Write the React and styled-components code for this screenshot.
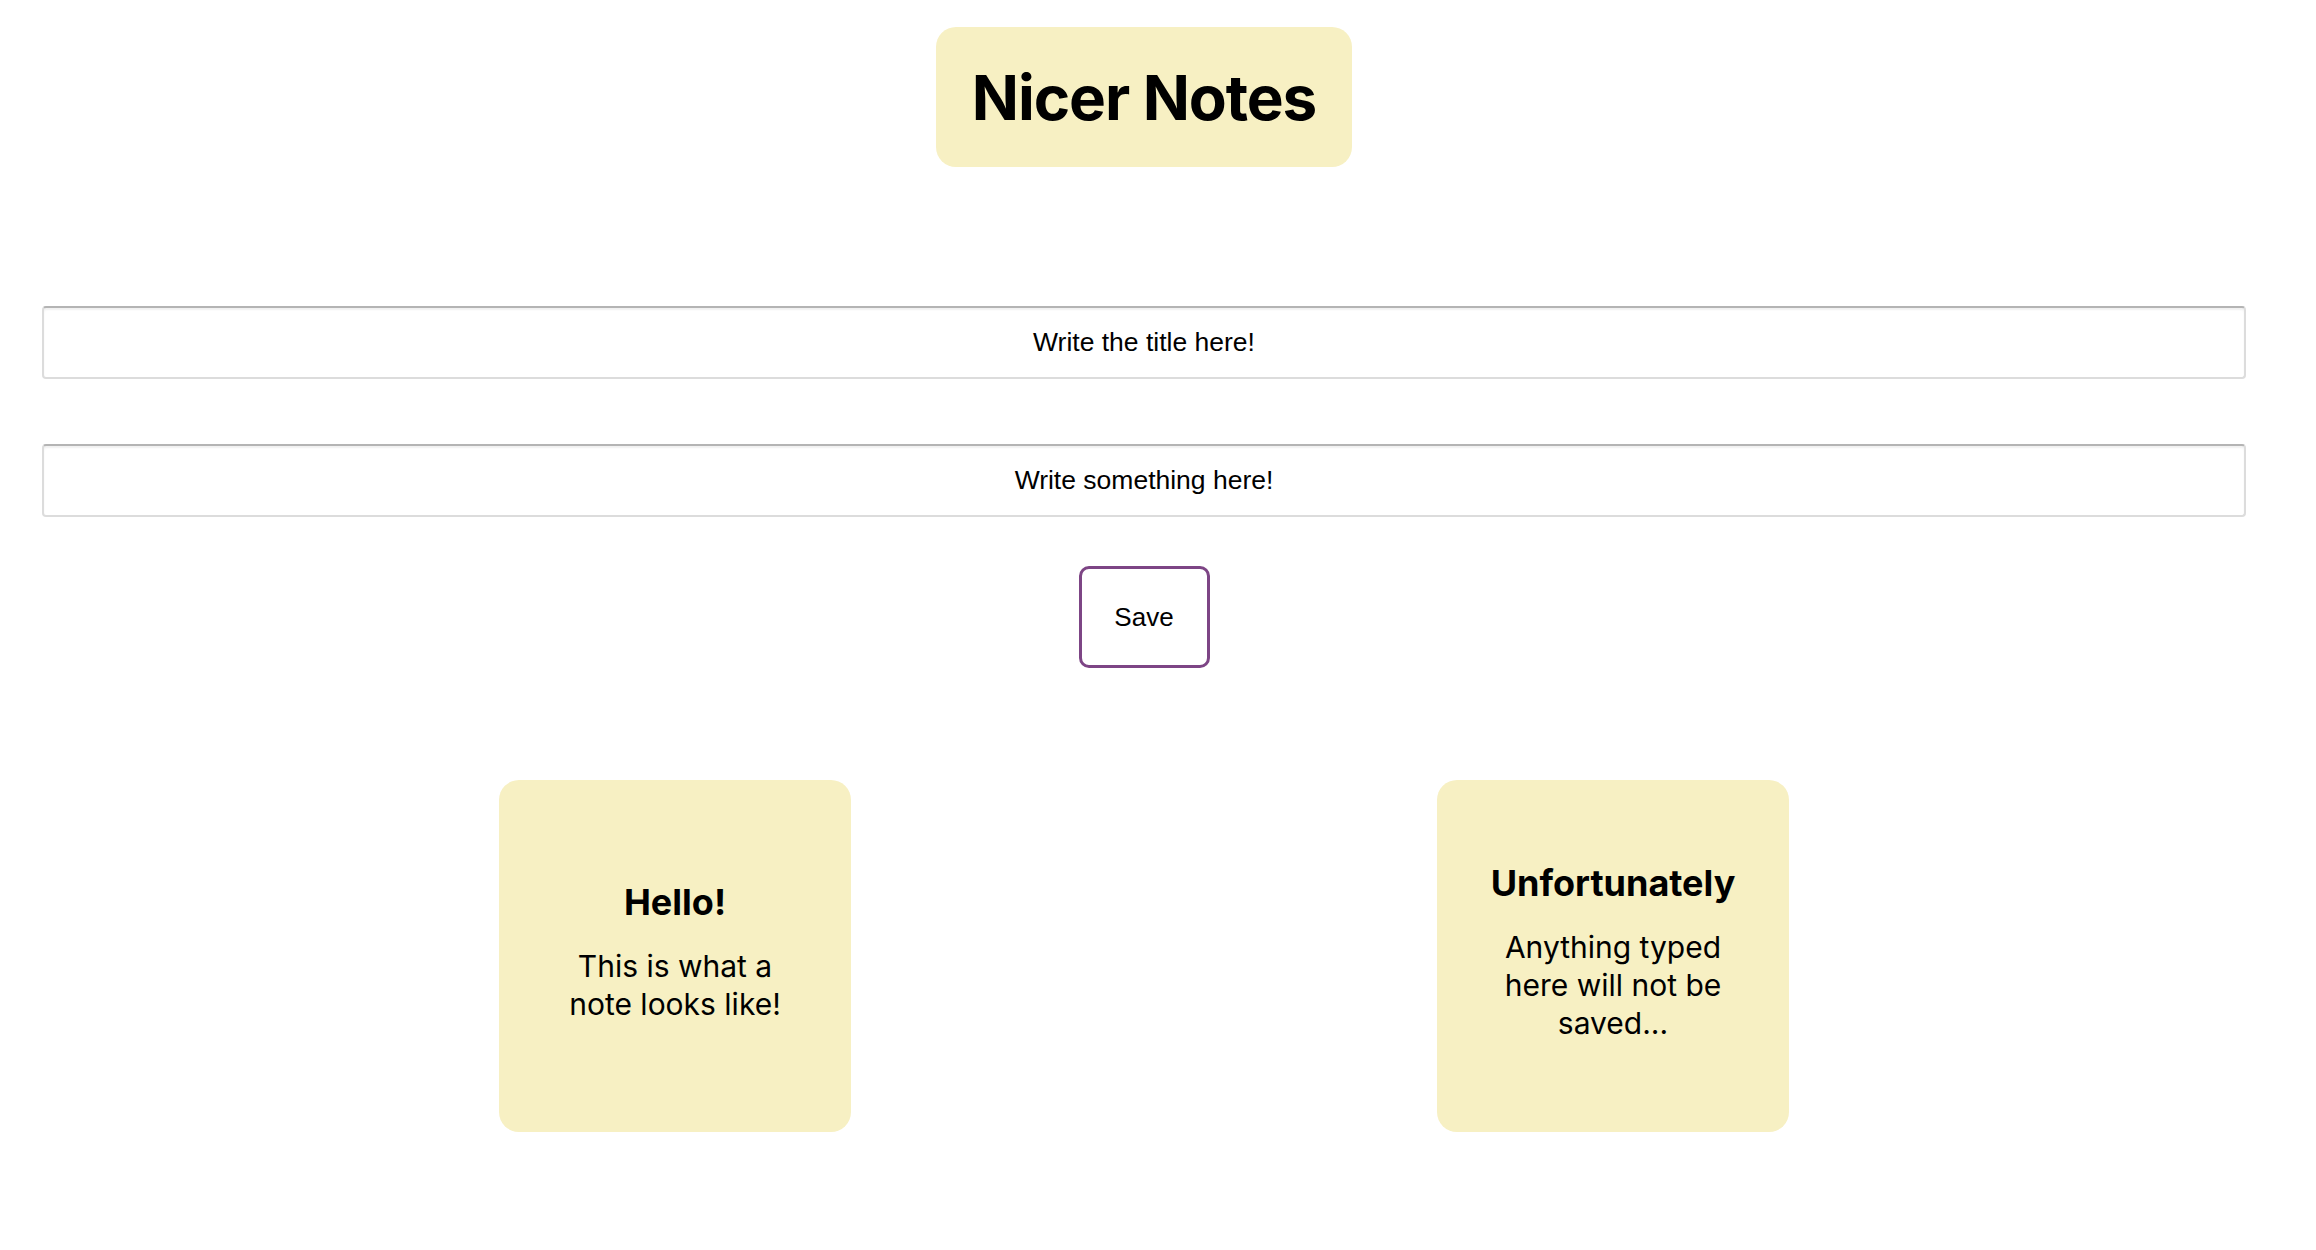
import React from 'react'
import styled, { createGlobalStyle } from 'styled-components'

const GlobalStyle = createGlobalStyle`
    body {
        margin: 0;
        background: #ffffff;
        font-family: Inter, 'Noto Sans', sans-serif;
        color: #000;
    }
`

const Page = styled.div`
    display: flex;
    flex-direction: column;
    align-items: center;
    padding-right: 28px;
    padding-top: 27px;
    padding-bottom: 80px;
`

const Header = styled.div`
    background-color: #f7f0c3;
    border-radius: 20px;
    padding: 33px 36px 32px;
`

const Title = styled.h1`
    margin: 0;
    font-family: Inter, sans-serif;
    font-weight: 700;
    font-size: 62px;
    line-height: 75px;
    letter-spacing: -1.1px;
`

const Form = styled.form`
    width: 100%;
    box-sizing: border-box;
    padding: 0 42px;
    margin-top: 139px;
    display: flex;
    flex-direction: column;
    align-items: center;
    gap: 65px;
`

const Field = styled.input`
    width: 100%;
    height: 73px;
    box-sizing: border-box;
    border: 2px solid #dcdcdc;
    border-top-color: #b4b4b4;
    border-radius: 4px;
    box-shadow: inset 0 2px 2px rgba(0, 0, 0, 0.06);
    background: #fff;
    font-family: 'Liberation Sans', Arial, sans-serif;
    font-size: 26.5px;
    text-align: center;
    outline: none;

    &::placeholder {
        color: #000;
        opacity: 1;
    }
`

const SaveButton = styled.button`
    margin-top: -16px;
    width: 131px;
    height: 102px;
    background: #fff;
    border: 3px solid #7d4585;
    border-radius: 10px;
    font-family: 'Liberation Sans', Arial, sans-serif;
    font-size: 26px;
    color: #000;
    cursor: pointer;
`

const Notes = styled.div`
    display: flex;
    justify-content: center;
    gap: 586px;
    margin-top: 112px;
`

const Note = styled.div`
    width: 352px;
    height: 352px;
    box-sizing: border-box;
    padding: 0 48px 10px;
    background-color: #f7f0c3;
    border-radius: 20px;
    display: flex;
    flex-direction: column;
    justify-content: center;
    align-items: center;
    text-align: center;
`

const NoteTitle = styled.h2`
    margin: 0;
    font-family: Inter, sans-serif;
    font-weight: 700;
    font-size: 36px;
    line-height: 44px;
`

const NoteBody = styled.p`
    margin: 23px 0 0;
    font-family: Inter, sans-serif;
    font-weight: 400;
    font-size: 30px;
    line-height: 38px;
`

const notes = [
    { title: 'Hello!', body: 'This is what a note looks like!' },
    { title: 'Unfortunately', body: 'Anything typed here will not be saved...' },
]

export default function App() {
    return (
        <>
            <GlobalStyle />
            <Page>
                <Header>
                    <Title>Nicer Notes</Title>
                </Header>

                <Form onSubmit={e => e.preventDefault()}>
                    <Field placeholder="Write the title here!" />
                    <Field placeholder="Write something here!" />
                    <SaveButton type="submit">Save</SaveButton>
                </Form>

                <Notes>
                    {notes.map(n => (
                        <Note key={n.title}>
                            <NoteTitle>{n.title}</NoteTitle>
                            <NoteBody>{n.body}</NoteBody>
                        </Note>
                    ))}
                </Notes>
            </Page>
        </>
    )
}
